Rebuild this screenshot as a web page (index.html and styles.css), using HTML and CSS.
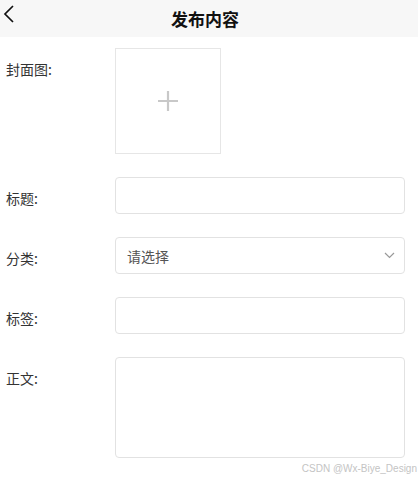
FILE: index.html
```html
<!DOCTYPE html>
<html lang="zh-CN">
<head>
<meta charset="UTF-8">
<meta name="viewport" content="width=device-width, initial-scale=1.0">
<title>发布内容</title>
<link rel="stylesheet" href="styles.css">
</head>
<body>
<div class="page">
  <div class="header">
    <span class="back">
      <svg width="14" height="20" viewBox="0 0 14 20"><path d="M11 2 L3 10 L11 18" fill="none" stroke="#111" stroke-width="1.7"/></svg>
    </span>
    <h1>发布内容</h1>
  </div>

  <form class="publish-form">
    <div class="row">
      <label class="label">封面图:</label>
      <div class="upload">
        <svg width="20" height="20" viewBox="0 0 20 20"><path d="M10 0 V20 M0 10 H20" stroke="#c8c8c8" stroke-width="2.2"/></svg>
      </div>
    </div>

    <div class="row">
      <label class="label">标题:</label>
      <input type="text" class="field">
    </div>

    <div class="row">
      <label class="label">分类:</label>
      <div class="field select">
        <span>请选择</span>
        <svg width="11" height="7" viewBox="0 0 11 7"><path d="M1 1 L5.5 5.5 L10 1" fill="none" stroke="#999" stroke-width="1.2"/></svg>
      </div>
    </div>

    <div class="row">
      <label class="label">标签:</label>
      <input type="text" class="field">
    </div>

    <div class="row">
      <label class="label">正文:</label>
      <textarea class="field area"></textarea>
    </div>
  </form>

  <div class="watermark">CSDN @Wx-Biye_Design</div>
</div>
</body>
</html>
```

FILE: styles.css
```css
body {
  margin: 0;
  padding: 0;
  background-color: #fff;
  font-family: "Noto Sans CJK SC", "Liberation Sans", sans-serif;
  color: #333;
  overflow: hidden;
}

.page {
  position: relative;
  height: 481px;
}

.header {
  height: 37px;
  background-color: #f7f7f7;
  display: flex;
  align-items: center;
  justify-content: center;
  position: relative;
}

.header h1 {
  margin: 0;
  font-size: 17px;
  font-weight: bold;
  color: #111;
  padding-right: 8px;
}

.back {
  position: absolute;
  left: 2px;
  top: 4px;
}

.publish-form {
  padding: 11px 13px 0 6px;
  display: flex;
  flex-direction: column;
  gap: 23px;
}

.row {
  display: flex;
  align-items: flex-start;
}

.label {
  width: 109px;
  flex-shrink: 0;
  font-size: 14px;
  line-height: 20px;
  padding-top: 11px;
  color: #333;
}

.upload {
  width: 104px;
  height: 104px;
  border: 1px solid #e6e6e6;
  display: flex;
  align-items: center;
  justify-content: center;
}

.field {
  flex: 1;
  box-sizing: border-box;
  height: 37px;
  border: 1px solid #e2e2e2;
  border-radius: 4px;
  background: #fff;
  margin: 0;
  padding: 0 11px;
  font-family: inherit;
  font-size: 14px;
  outline: none;
}

.select {
  display: flex;
  align-items: center;
  justify-content: space-between;
  color: #555;
  padding-right: 9px;
}

.area {
  height: 101px;
  resize: none;
}

.watermark {
  position: absolute;
  right: 1px;
  top: 463px;
  font-family: "Liberation Sans", sans-serif;
  font-size: 10px;
  color: #c4c4c4;
  white-space: nowrap;
}
```
